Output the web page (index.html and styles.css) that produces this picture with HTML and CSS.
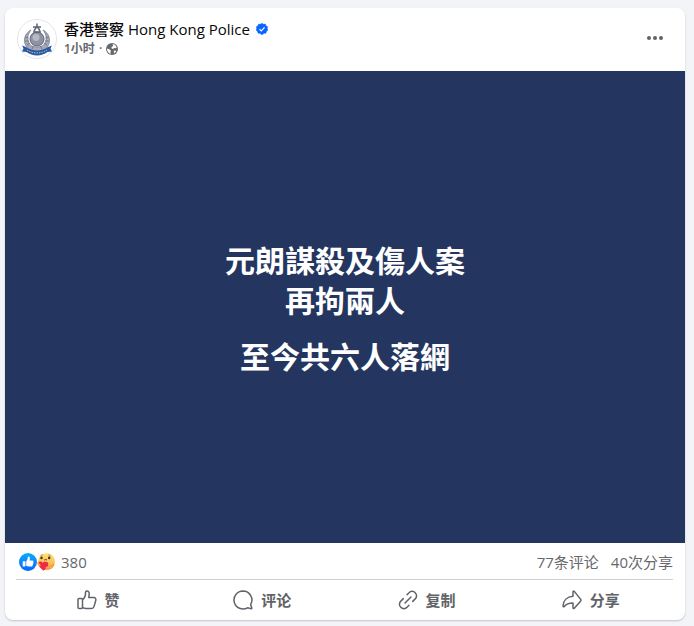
FILE: index.html
```html
<!DOCTYPE html>
<html lang="zh-Hans">
<head>
    <meta charset="UTF-8">
    <meta name="viewport" content="width=device-width, initial-scale=1.0">
    <title>香港警察 Hong Kong Police</title>
    <link rel="stylesheet" href="styles.css">
</head>
<body>
    <article class="post">
        <header class="post-header">
            <a href="#" class="avatar" aria-label="香港警察 Hong Kong Police">
                <svg viewBox="0 0 40 40" width="40" height="40">
                    <circle cx="20" cy="20" r="19.5" fill="#fff" stroke="#e2e4e8"/>
                    <path d="M14 11C8 14 5.500 21 9 27c2.500 4 7 5.500 11 5.500s8.500-1.500 11-5.500c3.500-6 1-13-5-16 3 4 4 8 2.500 12-1.500 3.500-4 5-8.500 5s-7-1.500-8.500-5C10 19 11 15 14 11z" fill="#a4a9b5" stroke="#747a8b" stroke-width=".7"/>
                    <path d="M8.500 18l3 1M8.300 22l3.500 0M10 26l3-2M15 30l1.500-3M31.500 18l-3 1M31.700 22l-3.500 0M30 26l-3-2M25 30l-1.500-3" stroke="#646b7d" stroke-width=".8"/>
                    <circle cx="20" cy="20" r="7" fill="#8d93a3" stroke="#5d6477"/>
                    <circle cx="19" cy="18.500" r="3.500" fill="#b5bac5"/>
                    <path d="M20 4.500v3M16 8h8M20 7l-3 5M20 7l3 5M16 13h8" fill="none" stroke="#5d6374" stroke-width="1.500"/>
                    <path d="M5 26.500l4 1.500c6 4.500 16 4.500 22 0l4-1.500-1.500 3 1.500 3-4.500.5c-6 4.500-15 4.500-21 0L5 32.500l1.500-3z" fill="#2c58a0"/>
                    <path d="M10 31c6 4 14 4 20 0" fill="none" stroke="#a9bddf" stroke-width="1" stroke-dasharray="1.500 1"/>
                </svg>
            </a>
            <div class="byline">
                <h2 class="name">
                    <a href="#">香港警察 Hong Kong Police</a>
                    <svg viewBox="0 0 12 12" width="12" height="12" aria-hidden="true">
                        <path d="M6 .3l1.500 1 1.800-.2.700 1.700 1.600.9-.3 1.800.5 1.700-1.400 1.200-.5 1.800-1.800.1L6 11.700l-2.100-1.400-1.800-.1-.5-1.800L.2 7.200l.5-1.700-.3-1.800L2 2.800l.7-1.700 1.800.2z" fill="#0866ff" stroke="#0866ff" stroke-width=".5" stroke-linejoin="round"/>
                        <path d="M3.500 6.100l1.800 1.800 3.300-3.500" fill="none" stroke="#fff" stroke-width="1.200"/>
                    </svg>
                </h2>
                <div class="meta">
                    <a href="#">1小时</a>
                    <span>·</span>
                    <svg viewBox="0 0 12 12" width="12" height="12" aria-hidden="true">
                        <circle cx="6" cy="6" r="6" fill="#65686c"/>
                        <path d="M1 5.500l2.300.8 1.700 1.500-.6 1.500.3 1.700C2.500 10.300.9 8.300 1 5.500zM6.500 1l2.500.8 1.700 2.400-.9 1.100-1.600-.2L7 6 5.400 5.300l.3-1.500 1.500-.7zM8 7.500l1.800.2.400.9-1.700 1.600-.8-1.200z" fill="#fff"/>
                    </svg>
                </div>
            </div>
            <button class="more" aria-label="更多">
                <svg viewBox="0 0 20 20" width="20" height="20" fill="#606367">
                    <circle cx="4" cy="10" r="2"/>
                    <circle cx="10" cy="10" r="2"/>
                    <circle cx="16" cy="10" r="2"/>
                </svg>
            </button>
        </header>

        <div class="banner">
            <p>元朗謀殺及傷人案<br>再拘兩人</p>
            <p>至今共六人落網</p>
        </div>

        <footer class="post-footer">
            <div class="stats">
                <a href="#" class="reactions">
                    <svg viewBox="0 0 18 18" width="18" height="18" aria-hidden="true">
                        <defs>
                            <linearGradient id="like" x1="0" y1="0" x2="0" y2="1">
                                <stop offset="0" stop-color="#0babf7"/>
                                <stop offset="1" stop-color="#0866ff"/>
                            </linearGradient>
                        </defs>
                        <circle cx="9" cy="9" r="9" fill="url(#like)"/>
                        <path d="M4.300 8.200h1.500c.4 0 .7.300.7.700v3.800c0 .4-.3.700-.7.700H4.300c-.4 0-.7-.3-.7-.7V8.900c0-.4.300-.7.700-.7zM7.200 8.400l1.500-2.600V4.500c0-.7.500-1 1-1 1 0 1.400 1 1.200 2l-.4 1.900h2.900c1 0 1.500 1.100.8 1.800.5.600.3 1.300-.2 1.600.3.600.1 1.200-.4 1.500.1.800-.4 1.300-1.200 1.300H9.500c-1 0-1.700-.3-2.300-.8z" fill="#fff"/>
                    </svg>
                    <svg viewBox="0 0 18 18" width="18" height="18" aria-hidden="true">
                        <defs>
                            <linearGradient id="care" x1="0" y1="0" x2="0" y2="1">
                                <stop offset="0" stop-color="#ffe36b"/>
                                <stop offset="1" stop-color="#f7a94a"/>
                            </linearGradient>
                        </defs>
                        <circle cx="9.500" cy="8.700" r="8.500" fill="url(#care)"/>
                        <path d="M3.500 2.700q1-1 2.200-.9M11.500 1.900q1.300 0 2.200 1" fill="none" stroke="#9b622b" stroke-width=".8"/>
                        <ellipse cx="4.500" cy="4.900" rx="1.200" ry="1.400" fill="#3c2c2b"/>
                        <ellipse cx="12.200" cy="4.900" rx="1.200" ry="1.400" fill="#3c2c2b"/>
                        <path d="M7.200 7q1.400-.9 2.800 0" fill="none" stroke="#6c3823" stroke-width="1"/>
                        <path d="M6.500 17.800C4 15.500 1.200 13 1.200 10.700c0-2.400 3.300-2.900 4.300-.6 1.300-2.200 6-1.700 5.900 1 0 2.400-2.600 4.800-4.900 6.700z" fill="#ee294b"/>
                        <path d="M.6 9.300c-.9 1.600.2 3.500 1.900 3.800 1 .2 1.500-.8.800-1.400L1.700 9.700z" fill="#f9ad43"/>
                        <path d="M16.500 11c.5 2.300-1.500 4.600-4.300 4.900l-2.900-.3c-1.200-.2-1-1.700.2-1.700l2.700-.3z" fill="#f9ad43" stroke="#dc7734" stroke-width=".4"/>
                    </svg>
                    <span class="count">380</span>
                </a>
                <div class="totals">
                    <a href="#">77条评论</a>
                    <a href="#">40次分享</a>
                </div>
            </div>
            <div class="actions">
                <button>
                    <svg viewBox="0 0 20 20" width="20" height="20">
                        <rect x="1" y="8.500" width="4.500" height="10" rx="1"/>
                        <path d="M5.500 9.500C7.500 8.500 8.300 6.500 8.500 4V2.500c0-1 .6-1.500 1.500-1.500 1.500 0 2.300 1.500 2.200 3.200L11.800 7.500h5c1.500 0 2.400 1.300 2 2.700l-1.700 6.200c-.4 1.400-1.300 2.100-2.700 2.100H9c-1.500 0-2.500-.5-3.500-1.200"/>
                    </svg>
                    <span>赞</span>
                </button>
                <button>
                    <svg viewBox="0 0 20 20" width="20" height="20">
                        <path d="M10 1a9 9 0 1 0 4.500 16.800l3.800.9c.4.100.6-.2.500-.6l-1.200-3.500A9 9 0 0 0 10 1z"/>
                    </svg>
                    <span>评论</span>
                </button>
                <button>
                    <svg viewBox="0 0 20 20" width="20" height="20">
                        <path d="M7 13l6-6M9 4.700l2-2a4.200 4.200 0 0 1 6.200 0 4.200 4.200 0 0 1 0 6.200l-2.500 2.500M5.300 8.600l-2.500 2.500a4.200 4.200 0 0 0 0 6.200 4.200 4.200 0 0 0 6.200 0l2-2" stroke-linecap="round"/>
                    </svg>
                    <span>复制</span>
                </button>
                <button>
                    <svg viewBox="0 0 20 20" width="20" height="20">
                        <path d="M11 2v4.300C5 6.600 1.300 10.500 1 16c0 .8.800 1 1.300.4 1.900-2.300 4.400-3.400 8.700-3.400v4.700c0 .8.800 1.100 1.300.5l6.400-7.300c.4-.5.400-1 0-1.500l-6.400-8C11.800.8 11 1.200 11 2z"/>
                    </svg>
                    <span>分享</span>
                </button>
            </div>
        </footer>
    </article>
</body>
</html>
```

FILE: styles.css
```css
* {
    box-sizing: border-box;
}
body {
    margin: 0;
    padding: 8px 9px 6px 5px;
    background: #f2f4f7;
    color: #080809;
    font-family: "Open Sans", "Noto Sans CJK SC", sans-serif;
    font-size: 15px;
    line-height: 20px;
}
a {
    color: inherit;
    text-decoration: none;
}
svg {
    display: block;
    flex: none;
}
button {
    padding: 0;
    border: none;
    background: none;
    font: inherit;
    cursor: pointer;
}
.post {
    background: #fff;
    border-radius: 8px;
    box-shadow: 0 1px 2px rgba(0, 0, 0, 0.2);
}
.post-header {
    display: flex;
    align-items: flex-start;
    gap: 7px;
    padding: 11px 12px 12px;
}
.byline {
    flex: 1;
}
.name {
    display: flex;
    align-items: center;
    gap: 6px;
    margin: 0;
    font-size: 15px;
    font-weight: 500;
}
.meta {
    display: flex;
    align-items: center;
    gap: 4px;
    color: #65686c;
    font-size: 12px;
    font-weight: 600;
}
.more {
    padding: 9px 8px;
    border-radius: 50%;
}
.more:hover,
.actions button:hover {
    background: #f2f2f2;
}
.banner {
    display: flex;
    flex-direction: column;
    justify-content: center;
    gap: 16px;
    aspect-ratio: 36 / 25;
    background: #243660;
    color: #fff;
    font-family: "Noto Sans CJK TC", sans-serif;
    font-size: 30px;
    font-weight: 700;
    line-height: 40px;
    text-align: center;
}
.banner p {
    margin: 0;
}
.post-footer {
    padding: 0 12px 0 11px;
    color: #65686c;
}
.stats {
    display: flex;
    align-items: center;
    justify-content: space-between;
    padding: 9px 0 7px 3px;
    border-bottom: 1px solid #ced0d4;
}
.reactions {
    display: flex;
    align-items: center;
}
.count {
    margin-left: 6px;
}
.totals {
    display: flex;
    gap: 12px;
}
.actions {
    display: grid;
    grid-template-columns: repeat(4, 1fr);
    padding: 4px 0;
}
.actions button {
    display: flex;
    align-items: center;
    justify-content: center;
    gap: 8px;
    padding: 6px 0;
    border-radius: 4px;
    color: #606367;
    font-weight: 700;
}
.actions svg {
    fill: none;
    stroke: #606367;
    stroke-width: 1.5;
    stroke-linejoin: round;
}
```
